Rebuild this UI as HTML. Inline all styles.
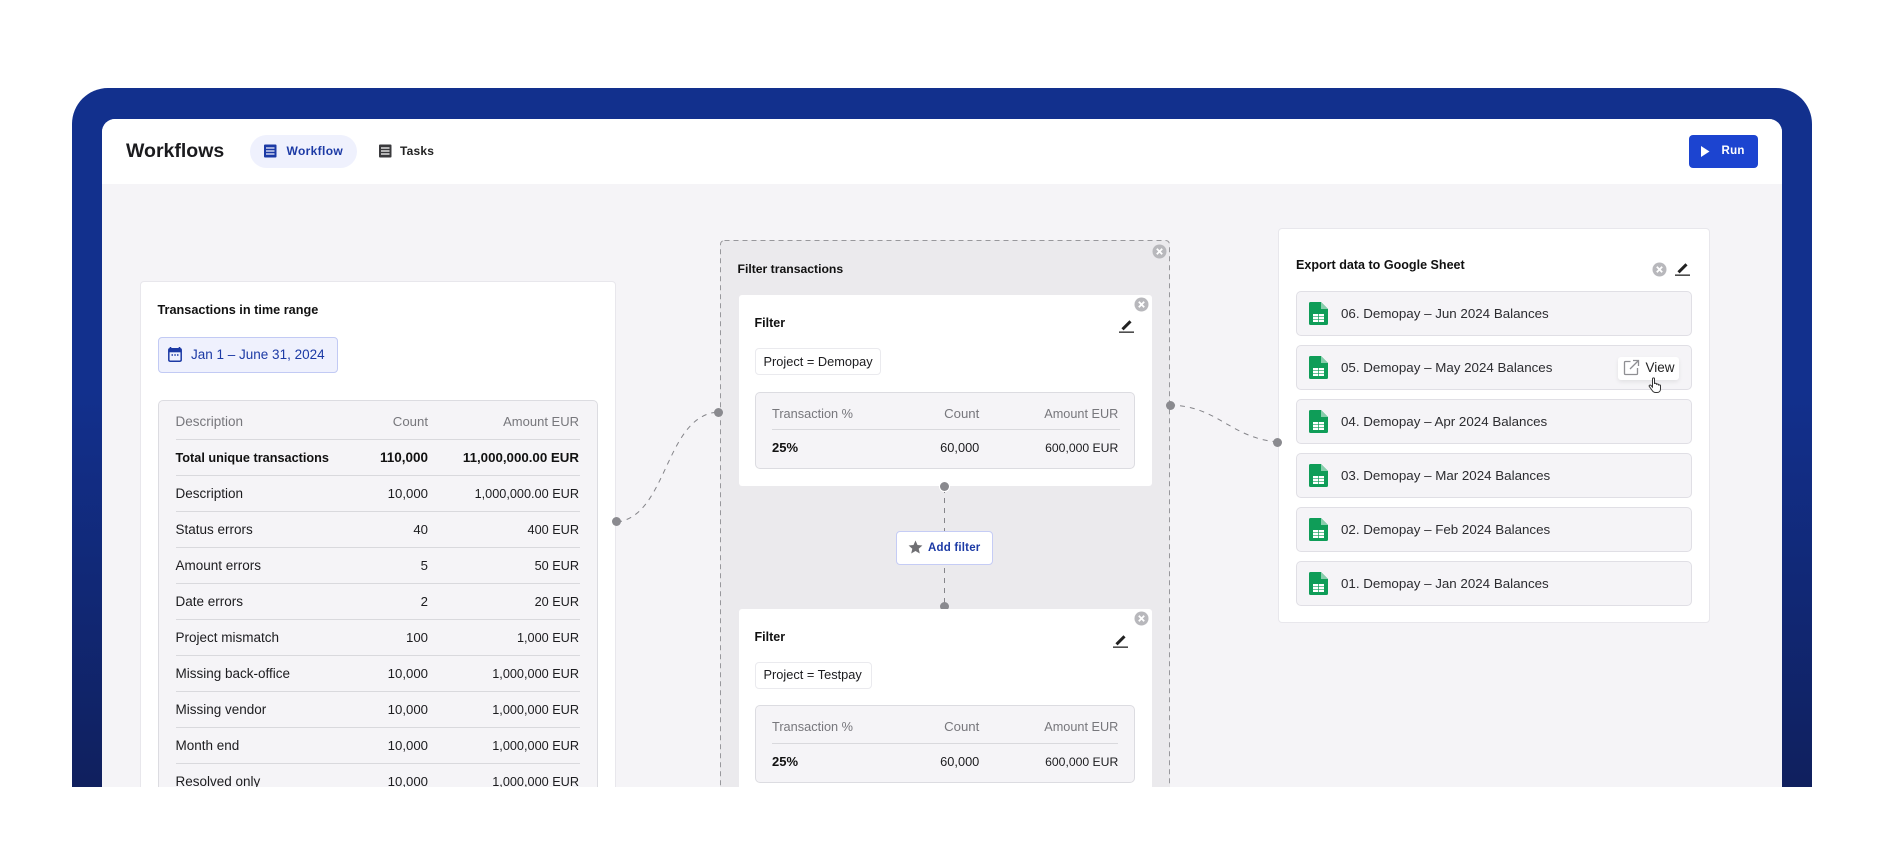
<!DOCTYPE html>
<html><head><meta charset="utf-8"><title>Workflows</title>
<style>
*{box-sizing:border-box;margin:0;padding:0}
html,body{width:1884px;height:843px;background:#fff;overflow:hidden;font-family:"Liberation Sans",sans-serif;color:#1c1c1f}
#stage{position:absolute;left:0;top:0;width:1884px;height:787px;overflow:hidden}
.a{position:absolute}
.frame{left:72px;top:88px;width:1740px;height:760px;border-radius:36px 36px 0 0;background:linear-gradient(#12308d 0,#12308d 40%,#10205e 92%)}
.inner{left:102px;top:118.500px;width:1680px;height:720px;background:#f5f4f7;border-radius:13px 13px 0 0;overflow:hidden}
.head{left:102px;top:118.500px;width:1680px;height:65.500px;background:#fff;border-radius:13px 13px 0 0}
.t{position:absolute;height:20px;line-height:20px;white-space:nowrap;font-size:13.5px}
.r{text-align:right;width:200px;font-size:13.2px}
.e{font-size:12.7px}
.b{font-weight:700;color:#111}
.g{color:#77777c}
.h{font-weight:700;font-size:13px;color:#111}
.card{position:absolute;background:#fff;border:1px solid #e8e7ec;border-radius:4px}
.box{position:absolute;background:#f5f4f7;border:1px solid #dcdce1;border-radius:5px}
.ln{position:absolute;height:1px;background:#d9d9dd}
.dot{position:absolute;width:9px;height:9px;border-radius:50%;background:#8a8a8f}
.chip{position:absolute;background:#fff;border:1px solid #eaeaee;border-radius:4px}
.row{position:absolute;left:1296px;width:396px;height:45px;background:#f5f4f7;border:1px solid #e0dfe5;border-radius:5px}
svg{position:absolute;display:block}
</style></head><body>
<div id="stage">
<div class="a frame"></div>
<div class="a inner"></div>
<div class="a head"></div>

<div class="t" style="left:126px;top:141px;font-size:19.5px;font-weight:700;color:#1b1b1e">Workflows</div>
<div class="a" style="left:250px;top:135px;width:107px;height:33px;background:#eff1fd;border-radius:17px"></div>
<svg style="left:263px;top:144px" width="15" height="14" viewBox="0 0 15 14"><rect x="1" y="0.5" width="12.5" height="13" rx="1" fill="#1c3aa5"/><path d="M3 4h8.500M3 7h8.500M3 10h8.500" stroke="#eff1fd" stroke-width="1.300"/></svg>
<div class="t" style="left:286.500px;top:141px;font-size:12px;font-weight:700;color:#1c3aa5;letter-spacing:.35px">Workflow</div>
<svg style="left:378px;top:144px" width="15" height="14" viewBox="0 0 15 14"><rect x="1" y="0.5" width="12.5" height="13" rx="1" fill="#3a3a3d"/><path d="M3 4h8.500M3 7h8.500M3 10h8.500" stroke="#fff" stroke-width="1.300"/></svg>
<div class="t" style="left:400px;top:141px;font-size:12px;font-weight:700;color:#222;letter-spacing:.2px">Tasks</div>

<div class="a" style="left:1688.500px;top:135px;width:69px;height:33px;background:#1c44d0;border-radius:4px"></div>
<svg style="left:1700px;top:145px" width="11" height="13" viewBox="0 0 11 13"><path d="M1 1l8.500 5.500L1 12z" fill="#fff"/></svg>
<div class="t" style="left:1721.500px;top:141px;font-size:11.500px;font-weight:700;color:#fff;letter-spacing:.3px">Run</div>

<svg style="left:0;top:0" width="1884" height="787" fill="none"><path d="M617 522C668 516 665 414 719 412" stroke="#85858a" stroke-dasharray="5 5"/><path d="M1170 405C1218 406 1230 438 1278 442" stroke="#85858a" stroke-dasharray="5 5"/></svg>

<!-- left card -->
<div class="card" style="left:140px;top:280.500px;width:476px;height:560px"></div>
<div class="t h" style="left:157.500px;top:299.500px;font-size:12.700px">Transactions in time range</div>
<div class="a" style="left:158px;top:336.500px;width:180px;height:36px;background:#eff1fd;border:1px solid #c2caf4;border-radius:4px"></div>
<svg style="left:167px;top:346px" width="16" height="17" viewBox="0 0 16 17"><path d="M3.500 1v2M12.500 1v2" stroke="#1c3aa5" stroke-width="1.600"/><rect x="1.800" y="2.800" width="12.400" height="12.400" rx="1.300" fill="none" stroke="#1c3aa5" stroke-width="1.500"/><rect x="1.800" y="2.800" width="12.400" height="3.500" fill="#1c3aa5"/><path d="M4.500 9h1.500M7.300 9h1.500M10 9h1.500" stroke="#1c3aa5" stroke-width="1.500"/></svg>
<div class="t" style="left:191px;top:345px;color:#1c3aa5">Jan 1 – June 31, 2024</div>

<div class="box" style="left:158px;top:400px;width:439.500px;height:450px"></div>
<div class="t g" style="left:175.500px;top:412px">Description</div><div class="t r g" style="left:228px;top:412px">Count</div><div class="t r g" style="left:379px;top:412px;font-size:13px">Amount EUR</div>
<div class="ln" style="left:176px;top:439px;width:404px"></div>
<div class="t b" style="left:175.500px;top:448px;font-size:12.700px">Total unique transactions</div><div class="t r b" style="left:228px;top:448px;font-size:13.500px">110,000</div><div class="t r b" style="left:379px;top:448px;font-size:13.300px">11,000,000.00 EUR</div>
<div class="ln" style="left:176px;top:475px;width:404px"></div>
<div class="t" style="left:175.500px;top:484px">Description</div><div class="t r" style="left:228px;top:484px">10,000</div><div class="t r e" style="left:379px;top:484px">1,000,000.00 EUR</div>
<div class="ln" style="left:176px;top:511px;width:404px"></div>
<div class="t" style="left:175.500px;top:520px">Status errors</div><div class="t r" style="left:228px;top:520px">40</div><div class="t r e" style="left:379px;top:520px">400 EUR</div>
<div class="ln" style="left:176px;top:547px;width:404px"></div>
<div class="t" style="left:175.500px;top:556px">Amount errors</div><div class="t r" style="left:228px;top:556px">5</div><div class="t r e" style="left:379px;top:556px">50 EUR</div>
<div class="ln" style="left:176px;top:583px;width:404px"></div>
<div class="t" style="left:175.500px;top:592px">Date errors</div><div class="t r" style="left:228px;top:592px">2</div><div class="t r e" style="left:379px;top:592px">20 EUR</div>
<div class="ln" style="left:176px;top:619px;width:404px"></div>
<div class="t" style="left:175.500px;top:628px">Project mismatch</div><div class="t r" style="left:228px;top:628px">100</div><div class="t r e" style="left:379px;top:628px">1,000 EUR</div>
<div class="ln" style="left:176px;top:655px;width:404px"></div>
<div class="t" style="left:175.500px;top:664px">Missing back-office</div><div class="t r" style="left:228px;top:664px">10,000</div><div class="t r e" style="left:379px;top:664px">1,000,000 EUR</div>
<div class="ln" style="left:176px;top:691px;width:404px"></div>
<div class="t" style="left:175.500px;top:700px">Missing vendor</div><div class="t r" style="left:228px;top:700px">10,000</div><div class="t r e" style="left:379px;top:700px">1,000,000 EUR</div>
<div class="ln" style="left:176px;top:727px;width:404px"></div>
<div class="t" style="left:175.500px;top:736px">Month end</div><div class="t r" style="left:228px;top:736px">10,000</div><div class="t r e" style="left:379px;top:736px">1,000,000 EUR</div>
<div class="ln" style="left:176px;top:763px;width:404px"></div>
<div class="t" style="left:175.500px;top:772px">Resolved only</div><div class="t r" style="left:228px;top:772px">10,000</div><div class="t r e" style="left:379px;top:772px">1,000,000 EUR</div>
<div class="dot" style="left:612px;top:517px"></div>

<!-- filter group -->
<div class="a" style="left:720px;top:240px;width:450px;height:600px;background:#ebeaed;border-radius:4px"></div>
<svg style="left:720px;top:240px" width="450" height="600" fill="none"><rect x=".5" y=".5" width="449" height="620" rx="4" stroke="#98989c" stroke-dasharray="5 4"/></svg>
<svg style="left:1152px;top:243.500px" width="15" height="15" viewBox="0 0 15 15"><circle cx="7.500" cy="7.500" r="7" fill="#b8b8bc"/><path d="M4.800 4.800l5.400 5.400M10.200 4.800l-5.400 5.400" stroke="#fff" stroke-width="1.800"/></svg>
<div class="t h" style="left:737.500px;top:259px;font-size:12.200px">Filter transactions</div>
<div class="dot" style="left:714px;top:408px"></div>
<div class="dot" style="left:1165.500px;top:400.500px"></div>

<svg style="left:940px;top:486px" width="8" height="125" fill="none"><path d="M4.500 2V122" stroke="#85858a" stroke-dasharray="5 5"/></svg>

<div class="a" style="left:738.500px;top:295px;width:413px;height:191px;background:#fff;border-radius:3px"></div>
<svg style="left:1134px;top:297px" width="15" height="15" viewBox="0 0 15 15"><circle cx="7.500" cy="7.500" r="7" fill="#b8b8bc"/><path d="M4.800 4.800l5.400 5.400M10.200 4.800l-5.400 5.400" stroke="#fff" stroke-width="1.800"/></svg>
<div class="t h" style="left:754.500px;top:312.500px;font-size:12.500px">Filter</div>
<svg style="left:1119px;top:319px" width="15" height="14" viewBox="0 0 15 14"><path d="M3.500 10.300L11.500 2.300" stroke="#222" stroke-width="3"/><rect x="0" y="12.500" width="15" height="1.300" fill="#222"/></svg>
<div class="chip" style="left:755px;top:348px;width:126px;height:27px"></div>
<div class="t" style="left:763.500px;top:351.500px;font-size:12.800px">Project = Demopay</div>
<div class="box" style="left:755px;top:391.500px;width:380px;height:77.500px"></div>
<div class="t g" style="left:772px;top:403.500px;font-size:12.750px">Transaction %</div><div class="t r g" style="left:779.300px;top:403.500px">Count</div><div class="t r g" style="left:918.300px;top:403.500px;font-size:12.700px">Amount EUR</div>
<div class="ln" style="left:772px;top:429px;width:348px"></div>
<div class="t b" style="left:772px;top:438px;font-size:13px">25%</div><div class="t r" style="left:779.300px;top:438px;font-size:12.800px">60,000</div><div class="t r" style="left:918.300px;top:438px;font-size:12.200px">600,000 EUR</div>
<div class="dot" style="left:939.800px;top:482px;box-shadow:0 0 0 1px #fff"></div>

<div class="a" style="left:896px;top:530.500px;width:97px;height:34px;background:#fff;border:1px solid #c5ccf5;border-radius:4px"></div>
<svg style="left:907.500px;top:540px" width="15" height="14" viewBox="0 0 15 14"><path d="M7.500.5l2 4.500 4.900.5-3.700 3.200 1.100 4.800-4.300-2.500-4.300 2.500 1.100-4.800L.6 5.500 5.500 5z" fill="#6f6f73"/></svg>
<div class="t" style="left:928px;top:538px;font-size:11.500px;font-weight:700;color:#1c3aa5;letter-spacing:.2px">Add filter</div>

<div class="dot" style="left:939.800px;top:602px"></div>
<div class="a" style="left:738.500px;top:609px;width:413px;height:240px;background:#fff;border-radius:3px"></div>
<svg style="left:1134px;top:611px" width="15" height="15" viewBox="0 0 15 15"><circle cx="7.500" cy="7.500" r="7" fill="#b8b8bc"/><path d="M4.800 4.800l5.400 5.400M10.200 4.800l-5.400 5.400" stroke="#fff" stroke-width="1.800"/></svg>
<div class="t h" style="left:754.500px;top:627px;font-size:12.500px">Filter</div>
<svg style="left:1113px;top:634px" width="15" height="14" viewBox="0 0 15 14"><path d="M3.500 10.300L11.500 2.300" stroke="#222" stroke-width="3"/><rect x="0" y="12.500" width="15" height="1.300" fill="#222"/></svg>
<div class="chip" style="left:755px;top:662px;width:117px;height:27px"></div>
<div class="t" style="left:763.500px;top:665px;font-size:12.800px">Project = Testpay</div>
<div class="box" style="left:755px;top:705px;width:380px;height:78px"></div>
<div class="t g" style="left:772px;top:717px;font-size:12.750px">Transaction %</div><div class="t r g" style="left:779.300px;top:717px">Count</div><div class="t r g" style="left:918.300px;top:717px;font-size:12.700px">Amount EUR</div>
<div class="ln" style="left:772px;top:743px;width:346px"></div>
<div class="t b" style="left:772px;top:751.500px;font-size:13px">25%</div><div class="t r" style="left:779.300px;top:751.500px;font-size:12.800px">60,000</div><div class="t r" style="left:918.300px;top:751.500px;font-size:12.200px">600,000 EUR</div>

<!-- right card -->
<div class="card" style="left:1278px;top:228px;width:431.500px;height:395px"></div>
<div class="dot" style="left:1273px;top:437.500px"></div>
<div class="t h" style="left:1296px;top:255px;font-size:12.550px">Export data to Google Sheet</div>
<svg style="left:1652px;top:262px" width="15" height="15" viewBox="0 0 15 15"><circle cx="7.500" cy="7.500" r="7" fill="#b8b8bc"/><path d="M4.800 4.800l5.400 5.400M10.200 4.800l-5.400 5.400" stroke="#fff" stroke-width="1.800"/></svg>
<svg style="left:1675px;top:261.500px" width="15" height="14" viewBox="0 0 15 14"><path d="M3.500 10.300L11.500 2.300" stroke="#222" stroke-width="3"/><rect x="0" y="12.500" width="15" height="1.300" fill="#222"/></svg>

<div class="row" style="top:291px"></div>
<svg style="left:1309px;top:302px" width="19" height="23" viewBox="0 0 19 23"><path d="M1.500 0H12l7 7v14.500a1.500 1.500 0 0 1-1.500 1.500h-16A1.500 1.500 0 0 1 0 21.500v-20A1.500 1.500 0 0 1 1.500 0z" fill="#0f9d58"/><path d="M12 0l7 7h-7z" fill="#87ceac"/><path d="M4 12h11v8H4z" fill="#fff"/><path d="M4 14.700h11M4 17.300h11M9.500 12v8" stroke="#0f9d58" stroke-width=".7"/></svg>
<div class="t" style="left:1341px;top:304px;color:#2c2c30;font-size:13.350px">06. Demopay – Jun 2024 Balances</div>

<div class="row" style="top:345px"></div>
<svg style="left:1309px;top:356px" width="19" height="23" viewBox="0 0 19 23"><path d="M1.500 0H12l7 7v14.500a1.500 1.500 0 0 1-1.500 1.500h-16A1.500 1.500 0 0 1 0 21.500v-20A1.500 1.500 0 0 1 1.500 0z" fill="#0f9d58"/><path d="M12 0l7 7h-7z" fill="#87ceac"/><path d="M4 12h11v8H4z" fill="#fff"/><path d="M4 14.700h11M4 17.300h11M9.500 12v8" stroke="#0f9d58" stroke-width=".7"/></svg>
<div class="t" style="left:1341px;top:358px;color:#2c2c30;font-size:13.350px">05. Demopay – May 2024 Balances</div>
<div class="a" style="left:1618px;top:356.500px;width:61px;height:23px;background:#fff;border-radius:3px;box-shadow:0 2px 4px rgba(0,0,0,.08)"></div>
<svg style="left:1623px;top:359px" width="17" height="17" viewBox="0 0 17 17" fill="none"><path d="M7.500 2.500H2.500a1 1 0 0 0-1 1v11a1 1 0 0 0 1 1h11a1 1 0 0 0 1-1V9" stroke="#8f8f93" stroke-width="1.300"/><path d="M10 1.500h5.500V7M15.500 1.500L7 10" stroke="#8f8f93" stroke-width="1.300"/></svg>
<div class="t" style="left:1645.500px;top:358px;font-size:13.500px;color:#222">View</div>
<svg style="left:1648px;top:377px" width="15" height="17" viewBox="0 0 15 17"><path d="M4.500 1.800c0-1.200 2-1.200 2 0v5.200c0-1 2-1 2 0v.8c0-1 2-1 2 0v.7c0-.9 2-.9 2 .2v3.300c0 2-1.300 3.500-3.500 3.500H7.500c-1.500 0-2.500-.8-3.300-2L1.300 9.500c-.6-1 .7-2 1.600-1.100l1.600 1.700z" fill="#fff" stroke="#333" stroke-width="1"/></svg>

<div class="row" style="top:399px"></div>
<svg style="left:1309px;top:410px" width="19" height="23" viewBox="0 0 19 23"><path d="M1.500 0H12l7 7v14.500a1.500 1.500 0 0 1-1.500 1.500h-16A1.500 1.500 0 0 1 0 21.500v-20A1.500 1.500 0 0 1 1.500 0z" fill="#0f9d58"/><path d="M12 0l7 7h-7z" fill="#87ceac"/><path d="M4 12h11v8H4z" fill="#fff"/><path d="M4 14.700h11M4 17.300h11M9.500 12v8" stroke="#0f9d58" stroke-width=".7"/></svg>
<div class="t" style="left:1341px;top:412px;color:#2c2c30;font-size:13.350px">04. Demopay – Apr 2024 Balances</div>

<div class="row" style="top:453px"></div>
<svg style="left:1309px;top:464px" width="19" height="23" viewBox="0 0 19 23"><path d="M1.500 0H12l7 7v14.500a1.500 1.500 0 0 1-1.500 1.500h-16A1.500 1.500 0 0 1 0 21.500v-20A1.500 1.500 0 0 1 1.500 0z" fill="#0f9d58"/><path d="M12 0l7 7h-7z" fill="#87ceac"/><path d="M4 12h11v8H4z" fill="#fff"/><path d="M4 14.700h11M4 17.300h11M9.500 12v8" stroke="#0f9d58" stroke-width=".7"/></svg>
<div class="t" style="left:1341px;top:466px;color:#2c2c30;font-size:13.350px">03. Demopay – Mar 2024 Balances</div>

<div class="row" style="top:507px"></div>
<svg style="left:1309px;top:518px" width="19" height="23" viewBox="0 0 19 23"><path d="M1.500 0H12l7 7v14.500a1.500 1.500 0 0 1-1.500 1.500h-16A1.500 1.500 0 0 1 0 21.500v-20A1.500 1.500 0 0 1 1.500 0z" fill="#0f9d58"/><path d="M12 0l7 7h-7z" fill="#87ceac"/><path d="M4 12h11v8H4z" fill="#fff"/><path d="M4 14.700h11M4 17.300h11M9.500 12v8" stroke="#0f9d58" stroke-width=".7"/></svg>
<div class="t" style="left:1341px;top:520px;color:#2c2c30;font-size:13.350px">02. Demopay – Feb 2024 Balances</div>

<div class="row" style="top:561px"></div>
<svg style="left:1309px;top:572px" width="19" height="23" viewBox="0 0 19 23"><path d="M1.500 0H12l7 7v14.500a1.500 1.500 0 0 1-1.500 1.500h-16A1.500 1.500 0 0 1 0 21.500v-20A1.500 1.500 0 0 1 1.500 0z" fill="#0f9d58"/><path d="M12 0l7 7h-7z" fill="#87ceac"/><path d="M4 12h11v8H4z" fill="#fff"/><path d="M4 14.700h11M4 17.300h11M9.500 12v8" stroke="#0f9d58" stroke-width=".7"/></svg>
<div class="t" style="left:1341px;top:574px;color:#2c2c30;font-size:13.350px">01. Demopay – Jan 2024 Balances</div>
</div>
</body></html>
